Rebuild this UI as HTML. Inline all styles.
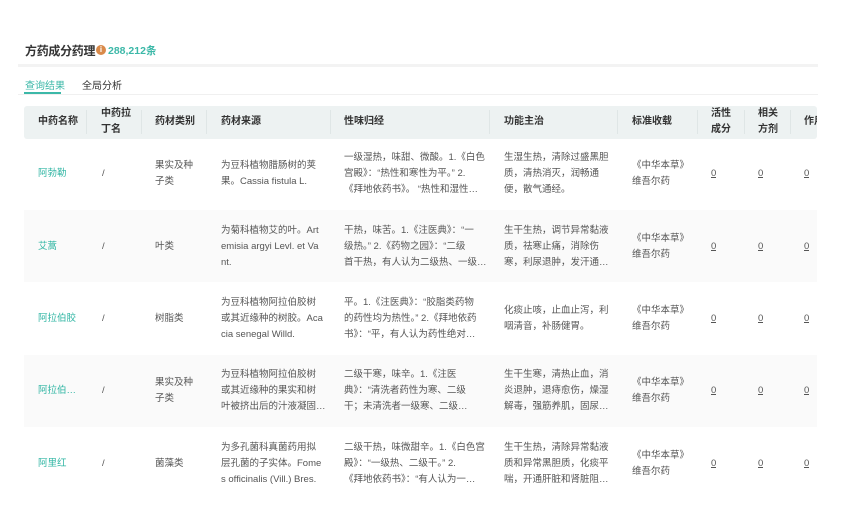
<!DOCTYPE html><html><head><meta charset="utf-8"><style>
*{margin:0;padding:0;box-sizing:border-box}
body{width:844px;height:507px;background:#fff;font-family:"Liberation Sans","Noto Sans CJK SC",sans-serif;position:relative;overflow:hidden;color:#555}
.a{position:absolute}
.title{left:25px;top:42px;font-size:12px;font-weight:bold;color:#333;letter-spacing:-0.3px}
.cnt{left:108px;top:43px;font-size:10.5px;font-weight:bold;color:#3cb8a8}
.info{left:96px;top:45px;width:10px;height:10px;border-radius:50%;background:#d98a4a;color:#fff;font-size:8px;line-height:10px;text-align:center;font-weight:bold}
.hdr{left:24px;top:106px;width:793px;height:33px;background:#edf2f2;border-radius:3px}
.row{left:24px;width:793px;height:72px}
.c{position:absolute;font-size:9.5px;line-height:16px;white-space:nowrap;overflow:hidden}
.h{font-weight:bold;color:#333;font-size:10px}
.sep{position:absolute;top:110px;width:1px;height:24px;background:#dfe6e6}
.g{color:#2fb5a3}
.u{text-decoration:underline}
</style></head><body>
<div class="a title">方药成分药理</div>
<div class="a info">i</div>
<div class="a cnt">288,212条</div>
<div class="a" style="left:18px;top:64px;width:800px;height:3px;background:#f3f3f3"></div>
<div class="a" style="left:25px;top:77px;font-size:10px;color:#3cb8a8">查询结果</div>
<div class="a" style="left:82px;top:77px;font-size:10px;color:#333">全局分析</div>
<div class="a" style="left:24px;top:92px;width:37px;height:2px;background:#3cb8a8"></div>
<div class="a" style="left:18px;top:94px;width:800px;height:1px;background:#f0f0f0"></div>
<div class="a hdr"></div>
<div class="sep" style="left:86px"></div><div class="sep" style="left:141px"></div><div class="sep" style="left:206px"></div><div class="sep" style="left:330px"></div><div class="sep" style="left:489px"></div><div class="sep" style="left:617px"></div><div class="sep" style="left:697px"></div><div class="sep" style="left:744px"></div><div class="sep" style="left:790px"></div>
<div class="c h" style="left:38px;top:114px">中药名称</div>
<div class="c h" style="left:101px;top:106px">中药拉<br>丁名</div>
<div class="c h" style="left:155px;top:114px">药材类别</div>
<div class="c h" style="left:221px;top:114px">药材来源</div>
<div class="c h" style="left:344px;top:114px">性味归经</div>
<div class="c h" style="left:504px;top:114px">功能主治</div>
<div class="c h" style="left:632px;top:114px">标准收载</div>
<div class="c h" style="left:711px;top:106px">活性<br>成分</div>
<div class="c h" style="left:758px;top:106px">相关<br>方剂</div>
<div class="c h" style="left:804px;top:114px;width:13px">作用</div>

<div class="a row" style="top:210px;background:#fafafa"></div>
<div class="a row" style="top:355px;background:#fafafa"></div>

<div class="c g" style="left:38px;top:166px">阿勃勒</div>
<div class="c" style="left:102px;top:166px">/</div>
<div class="c" style="left:155px;top:158px">果实及种<br>子类</div>
<div class="c" style="left:221px;top:158px">为豆科植物腊肠树的荚<br>果。Cassia fistula L.</div>
<div class="c" style="left:344px;top:150px">一级湿热，味甜、微酸。1.《白色<br>宫殿》：“热性和寒性为平。” 2.<br>《拜地依药书》。 “热性和湿性…</div>
<div class="c" style="left:504px;top:150px">生湿生热，清除过盛黑胆<br>质，清热消灭，润畅通<br>便，散气通经。</div>
<div class="c" style="left:632px;top:158px">《中华本草》<br>维吾尔药</div>
<div class="c u" style="left:711px;top:166px">0</div><div class="c u" style="left:758px;top:166px">0</div><div class="c u" style="left:804px;top:166px">0</div>

<div class="c g" style="left:38px;top:239px">艾蒿</div>
<div class="c" style="left:102px;top:239px">/</div>
<div class="c" style="left:155px;top:239px">叶类</div>
<div class="c" style="left:221px;top:223px">为菊科植物艾的叶。Art<br>emisia argyi Levl. et Va<br>nt.</div>
<div class="c" style="left:344px;top:223px">干热，味苦。1.《注医典》：“一<br>级热。” 2.《药物之园》：“二级<br>首干热，有人认为二级热、一级…</div>
<div class="c" style="left:504px;top:223px">生干生热，调节异常黏液<br>质，祛寒止痛，消除伤<br>寒，利尿退肿，发汗通…</div>
<div class="c" style="left:632px;top:231px">《中华本草》<br>维吾尔药</div>
<div class="c u" style="left:711px;top:239px">0</div><div class="c u" style="left:758px;top:239px">0</div><div class="c u" style="left:804px;top:239px">0</div>

<div class="c g" style="left:38px;top:311px">阿拉伯胶</div>
<div class="c" style="left:102px;top:311px">/</div>
<div class="c" style="left:155px;top:311px">树脂类</div>
<div class="c" style="left:221px;top:295px">为豆科植物阿拉伯胶树<br>或其近缘种的树胶。Aca<br>cia senegal Willd.</div>
<div class="c" style="left:344px;top:295px">平。1.《注医典》：“胶脂类药物<br>的药性均为热性。” 2.《拜地依药<br>书》：“平，有人认为药性绝对…</div>
<div class="c" style="left:504px;top:303px">化痰止咳，止血止泻，利<br>咽清音，补肠健胃。</div>
<div class="c" style="left:632px;top:303px">《中华本草》<br>维吾尔药</div>
<div class="c u" style="left:711px;top:311px">0</div><div class="c u" style="left:758px;top:311px">0</div><div class="c u" style="left:804px;top:311px">0</div>

<div class="c g" style="left:38px;top:383px">阿拉伯…</div>
<div class="c" style="left:102px;top:383px">/</div>
<div class="c" style="left:155px;top:375px">果实及种<br>子类</div>
<div class="c" style="left:221px;top:367px">为豆科植物阿拉伯胶树<br>或其近缘种的果实和树<br>叶被挤出后的汁液凝固…</div>
<div class="c" style="left:344px;top:367px">二级干寒，味辛。1.《注医<br>典》：“清洗者药性为寒、二级<br>干；未清洗者一级寒、二级…</div>
<div class="c" style="left:504px;top:367px">生干生寒，清热止血，消<br>炎退肿，退痔愈伤，燥湿<br>解毒，强筋养肌，固尿…</div>
<div class="c" style="left:632px;top:375px">《中华本草》<br>维吾尔药</div>
<div class="c u" style="left:711px;top:383px">0</div><div class="c u" style="left:758px;top:383px">0</div><div class="c u" style="left:804px;top:383px">0</div>

<div class="c g" style="left:38px;top:456px">阿里红</div>
<div class="c" style="left:102px;top:456px">/</div>
<div class="c" style="left:155px;top:456px">菌藻类</div>
<div class="c" style="left:221px;top:440px">为多孔菌科真菌药用拟<br>层孔菌的子实体。Fome<br>s officinalis (Vill.) Bres.</div>
<div class="c" style="left:344px;top:440px">二级干热，味微甜辛。1.《白色宫<br>殿》：“一级热、二级干。” 2.<br>《拜地依药书》：“有人认为一…</div>
<div class="c" style="left:504px;top:440px">生干生热，清除异常黏液<br>质和异常黑胆质，化痰平<br>喘，开通肝脏和肾脏阻…</div>
<div class="c" style="left:632px;top:448px">《中华本草》<br>维吾尔药</div>
<div class="c u" style="left:711px;top:456px">0</div><div class="c u" style="left:758px;top:456px">0</div><div class="c u" style="left:804px;top:456px">0</div>
</body></html>
